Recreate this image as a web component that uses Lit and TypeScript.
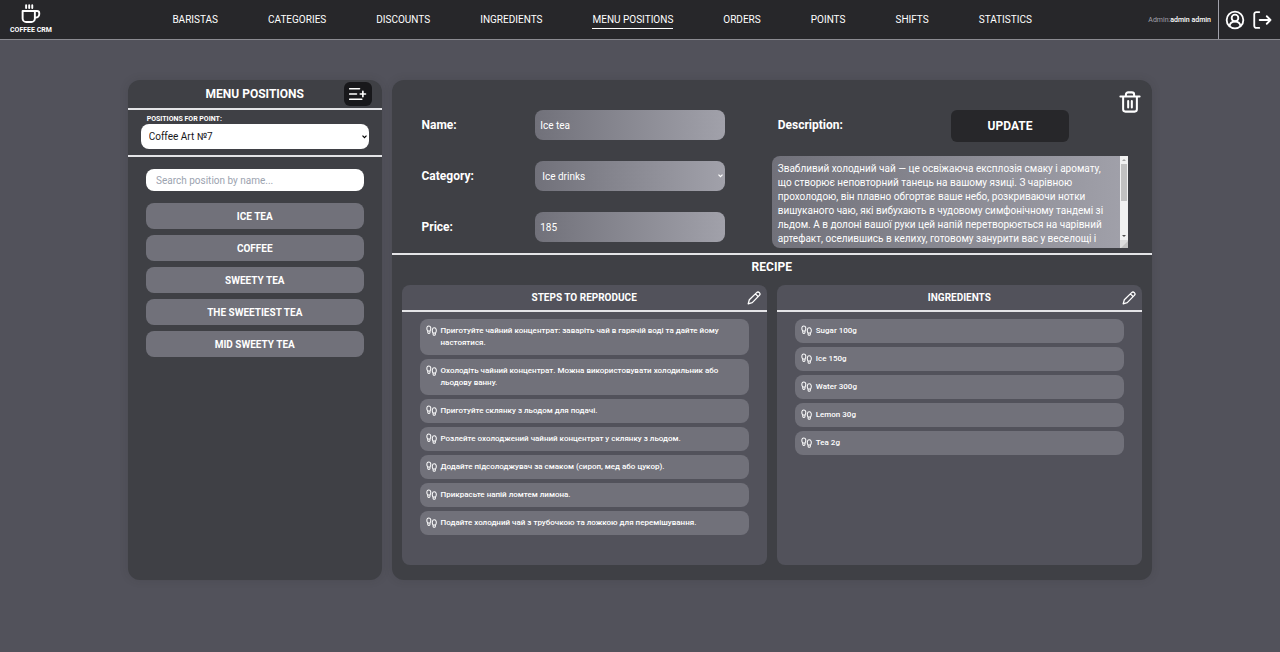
import { LitElement, html, css, svg } from "lit";
import { customElement, state } from "lit/decorators.js";
import { classMap } from "lit/directives/class-map.js";

const NAV = [
  "Baristas",
  "Categories",
  "Discounts",
  "Ingredients",
  "Menu positions",
  "Orders",
  "Points",
  "Shifts",
  "Statistics",
];

const POSITIONS = ["Ice tea", "Coffee", "Sweety tea", "The sweetiest tea", "Mid sweety tea"];

const STEPS = [
  "Приготуйте чайний концентрат: заваріть чай в гарячій воді та дайте йому настоятися.",
  "Охолодіть чайний концентрат. Можна використовувати холодильник або льодову ванну.",
  "Приготуйте склянку з льодом для подачі.",
  "Розлейте охолоджений чайний концентрат у склянку з льодом.",
  "Додайте підсолоджувач за смаком (сироп, мед або цукор).",
  "Прикрасьте напій ломтем лимона.",
  "Подайте холодний чай з трубочкою та ложкою для перемішування.",
];

const INGREDIENTS = ["Sugar 100g", "Ice 150g", "Water 300g", "Lemon 30g", "Tea 2g"];

const DESCRIPTION =
  "Звабливий холодний чай — це освіжаюча експлозія смаку і аромату, що створює неповторний танець на вашому язиці. З чарівною прохолодою, він плавно обгортає ваше небо, розкриваючи нотки вишуканого чаю, які вибухають в чудовому симфонічному тандемі зі льдом. А в долоні вашої руки цей напій перетворюється на чарівний артефакт, оселившись в келиху, готовому занурити вас у веселощі і";

const iconCup = svg`
  <path d="M7 1.500v3M10.500 1.500v3M14 1.500v3" />
  <path d="M3 8h14v8.500a4 4 0 0 1-4 4H7a4 4 0 0 1-4-4z" />
  <path d="M17 8h2.500A2.500 2.500 0 0 1 22 10.500v1a4 4 0 0 1-4 4h-1" />`;
const iconUser = svg`
  <circle cx="12" cy="12" r="10" />
  <circle cx="12" cy="9.500" r="4" />
  <path d="M5.500 19.500c.3-3.500 2.800-5.500 6.500-5.500s6.200 2 6.500 5.500" />`;
const iconExit = svg`
  <path d="M7.500 2.500H4A2.500 2.500 0 0 0 1.500 5v14A2.500 2.500 0 0 0 4 21.500h3.500" />
  <path d="M8 12h13M16.500 7.500L21 12l-4.500 4.500" />`;
const iconAdd = svg`
  <path d="M1 5h13M1 12h9M1 19h16M18.500 8.500v7M15 12h7" />`;
const iconTrash = svg`
  <path d="M1.500 6h21M4.500 6v14a2.500 2.500 0 0 0 2.500 2.500h10a2.500 2.500 0 0 0 2.500-2.500V6M7.500 5.500V4A2.500 2.500 0 0 1 10 1.500h4A2.500 2.500 0 0 1 16.500 4v1.500M10 11v7M14 11v7" />`;
const iconPencil = svg`
  <path d="M2 22l2-7L16.500 2.800a3.200 3.200 0 0 1 4.700 4.700L9 20zM14.500 5l4.500 4.500" />`;
const iconSteps = svg`
  <path d="M3.500 13C1 9 .8 2 6 2s5.500 6.500 3 11zM3.800 13v3a2.500 2.500 0 0 0 5 0v-3" />
  <path d="M15.200 17.500C12.800 13 13 6 18 6s5.500 7 2.800 11.500zM15.400 17.500v2.500a2.500 2.500 0 0 0 5 0v-2.500" />`;

const icon = (body: unknown, cls: string) =>
  html`<svg class="icon ${cls}" viewBox="0 0 24 24" aria-hidden="true">${body}</svg>`;

@customElement("app-root")
export class AppRoot extends LitElement {
  @state() private active = "Menu positions";

  static styles = css`
    :host {
      display: flex;
      flex-direction: column;
      min-height: 100vh;
      background: #52525b;
      color: #fff;
      font-family: Roboto, "Noto Sans", sans-serif;
      font-size: 10px;
    }
    *,
    *::before,
    *::after {
      box-sizing: border-box;
    }
    h1,
    h2,
    h3,
    ul {
      margin: 0;
      padding: 0;
      list-style: none;
    }
    button,
    input,
    select,
    textarea {
      font: inherit;
      color: inherit;
      border: 0;
      margin: 0;
    }
    button {
      cursor: pointer;
    }
    .icon {
      display: block;
      flex: none;
      fill: none;
      stroke: currentColor;
      stroke-width: 2.2;
      stroke-linecap: round;
      stroke-linejoin: round;
    }

    .topbar {
      display: flex;
      justify-content: space-between;
      align-items: stretch;
      height: 40px;
      background: #27272a;
      border-bottom: 1px solid #8b8b91;
    }
    .brand {
      display: flex;
      flex-direction: column;
      align-items: center;
      padding: 4px 4px 0 10px;
      color: #fff;
      text-decoration: none;
      font-size: 7px;
      line-height: 10px;
      font-weight: 700;
    }
    .cup {
      width: 21px;
      height: 21px;
    }
    .nav {
      display: flex;
      align-items: center;
      gap: 50px;
    }
    .nav-link {
      color: #fff;
      text-decoration: none;
      text-transform: uppercase;
      line-height: 16px;
      border-top: 1px solid transparent;
      border-bottom: 1px solid transparent;
    }
    .nav-link.current {
      border-bottom-color: #fff;
    }
    .session {
      display: flex;
      align-items: center;
      font-size: 7px;
    }
    .who {
      padding-right: 7px;
      color: #a1a1aa;
    }
    .who-name {
      color: #fff;
      font-weight: 500;
    }
    .actions {
      display: flex;
      align-items: center;
      gap: 8px;
      align-self: stretch;
      padding: 0 7px 0 6px;
      border-left: 1px solid #a1a1aa;
    }
    .bare {
      padding: 0;
      background: none;
    }
    .act {
      width: 20px;
      height: 20px;
    }

    .main {
      display: grid;
      grid-template-columns: minmax(0, 1fr) minmax(0, 3fr);
      gap: 10px;
      width: 80%;
      margin: 40px auto;
    }
    .panel {
      background: #3f4045;
      border-radius: 12px;
      box-shadow: 0 0 8px rgba(39, 39, 42, 0.15);
    }

    .side-head {
      display: grid;
      grid-template-columns: 28px 1fr 28px;
      align-items: center;
      padding: 2px 10px;
      height: 30px;
      border-bottom: 2px solid #e4e4e7;
      text-align: center;
    }
    .title {
      grid-column: 2;
      font-size: 12px;
      line-height: 16px;
      font-weight: 700;
      text-transform: uppercase;
    }
    .add {
      display: grid;
      place-items: center;
      height: 24px;
      padding: 0;
      background: #18181b;
      border-radius: 6px;
    }
    .add-icon {
      width: 18px;
      height: 18px;
    }
    .point {
      display: flex;
      flex-direction: column;
      padding: 4px 5% 6px;
      border-bottom: 2px solid #e4e4e7;
    }
    .point-label {
      padding-left: 6px;
      font-size: 7px;
      line-height: 10px;
      font-weight: 700;
      text-transform: uppercase;
    }
    .point-select {
      appearance: none;
      height: 25px;
      padding: 0 8px;
      border-radius: 8px;
      background: #fff
        url("data:image/svg+xml,%3Csvg xmlns='http://www.w3.org/2000/svg' width='5' height='4'%3E%3Cpath d='M.5 .7l2 2 2-2' fill='none' stroke='%23000' stroke-width='1.200'/%3E%3C/svg%3E")
        right 2px center no-repeat;
      color: #18181b;
    }
    .side-body {
      display: flex;
      flex-direction: column;
      gap: 12px;
      padding: 12px 18px;
    }
    .search {
      width: 100%;
      height: 22px;
      padding: 0 10px;
      border-radius: 8px;
      background: #fff;
      color: #18181b;
    }
    .search::placeholder {
      color: #9ca3af;
    }
    .positions {
      display: grid;
      gap: 6px;
    }
    .position {
      width: 100%;
      height: 26px;
      padding: 0;
      border-radius: 8px;
      background: #71717a;
      font-weight: 700;
      text-transform: uppercase;
    }

    .editor {
      display: grid;
      grid-template-columns: repeat(2, minmax(0, 1fr));
      border-bottom: 2px solid #e4e4e7;
    }
    .fields {
      display: grid;
      gap: 21px;
      align-content: start;
      padding: 30px 47px 11px 30px;
    }
    .field {
      display: grid;
      grid-template-columns: 3fr 5fr;
      align-items: center;
    }
    .label {
      font-size: 12px;
      font-weight: 700;
    }
    .control {
      width: 100%;
      min-width: 0;
      height: 30px;
      padding: 0 5px;
      border-radius: 8px;
      background: linear-gradient(90deg, #71717a, #a1a1aa);
    }
    .category {
      appearance: none;
      padding: 0 7px;
      background:
        url("data:image/svg+xml,%3Csvg xmlns='http://www.w3.org/2000/svg' width='5' height='4'%3E%3Cpath d='M.5 .7l2 2 2-2' fill='none' stroke='%23fff' stroke-width='1.200'/%3E%3C/svg%3E")
          right 2px center no-repeat,
        linear-gradient(90deg, #71717a, #a1a1aa);
    }
    .details {
      display: flex;
      flex-direction: column;
      gap: 14px;
      padding: 10px 11px 5px 0;
    }
    .details-head {
      display: flex;
      align-items: flex-start;
      justify-content: space-between;
      height: 52px;
      padding-left: 6px;
    }
    .details-head .label {
      line-height: 30px;
      margin-top: 20px;
    }
    .head-actions {
      display: flex;
      align-items: flex-start;
      gap: 50px;
    }
    .update {
      width: 118px;
      height: 32px;
      margin-top: 20px;
      padding: 0;
      border-radius: 6px;
      background: #27272a;
      font-size: 12px;
      font-weight: 700;
      text-transform: uppercase;
    }
    .trash {
      width: 22px;
      height: 24px;
    }
    .description-box {
      display: grid;
      grid-template-columns: minmax(0, 1fr) 8px;
      height: 92px;
      margin-right: 13px;
      border-radius: 8px 0 0 8px;
      background: linear-gradient(90deg, #71717a, #a1a1aa);
      overflow: hidden;
    }
    .description {
      height: 92px;
      padding: 6px;
      background: none;
      line-height: 14px;
      resize: none;
      outline: none;
      scrollbar-width: none;
    }
    .scrollbar {
      display: flex;
      flex-direction: column;
      align-items: center;
      background: #f1f1f1;
    }
    .scroll-arrow {
      display: block;
      width: 8px;
      height: 8px;
      fill: #505050;
    }
    .scroll-arrow.start {
      fill: #a3a3a3;
    }
    .scroll-track {
      flex: 1;
      width: 6px;
    }
    .scroll-thumb {
      width: 6px;
      height: 55%;
      background: #c1c1c1;
    }
    .grip {
      display: block;
      width: 8px;
      height: 8px;
      background: #dcdcdc;
      fill: #c1c1c1;
    }

    .recipe {
      padding: 4px 10px 15px;
    }
    .recipe-title {
      padding-bottom: 10px;
      text-align: center;
    }
    .cards {
      display: grid;
      grid-template-columns: repeat(2, minmax(0, 1fr));
      gap: 10px;
    }
    .card {
      min-height: 280px;
      border-radius: 8px;
      background: #52525b;
    }
    .card-head {
      display: grid;
      grid-template-columns: 14px 1fr 14px;
      align-items: center;
      height: 27px;
      padding: 0 6px;
      border-bottom: 2px solid #e4e4e7;
      text-align: center;
    }
    .card-title {
      grid-column: 2;
      font-size: 10px;
      font-weight: 700;
      text-transform: uppercase;
    }
    .pencil {
      width: 14px;
      height: 14px;
    }
    .items {
      display: grid;
      gap: 4px;
      padding: 7px 18px;
    }
    .item {
      display: flex;
      gap: 4px;
      padding: 6px;
      border-radius: 8px;
      background: #71717a;
      font-size: 8px;
      line-height: 12px;
      font-weight: 500;
    }
    .item-text {
      flex: 1;
      max-width: 292px;
    }
    .steps {
      width: 11px;
      height: 11px;
    }
  `;

  private renderCard(title: string, items: string[]) {
    return html`
      <section class="card">
        <header class="card-head">
          <h3 class="card-title">${title}</h3>
          <button class="bare" aria-label="Edit ${title.toLowerCase()}">${icon(iconPencil, "pencil")}</button>
        </header>
        <ul class="items">
          ${items.map(
            (text) => html`<li class="item">${icon(iconSteps, "steps")}<span class="item-text">${text}</span></li>`
          )}
        </ul>
      </section>
    `;
  }

  render() {
    return html`
      <header class="topbar">
        <a class="brand" href="#">${icon(iconCup, "cup")}COFFEE CRM</a>
        <nav class="nav">
          ${NAV.map(
            (name) => html`<a
              href="#"
              class=${classMap({ "nav-link": true, current: name === this.active })}
              @click=${(e: Event) => {
                e.preventDefault();
                this.active = name;
              }}
              >${name}</a
            >`
          )}
        </nav>
        <div class="session">
          <span class="who">Admin:<span class="who-name">admin admin</span></span>
          <div class="actions">
            <button class="bare" aria-label="Profile">${icon(iconUser, "act")}</button>
            <button class="bare" aria-label="Log out">${icon(iconExit, "act")}</button>
          </div>
        </div>
      </header>

      <main class="main">
        <aside class="panel">
          <header class="side-head">
            <h1 class="title">Menu positions</h1>
            <button class="add" aria-label="Add position">${icon(iconAdd, "add-icon")}</button>
          </header>
          <div class="point">
            <label class="point-label" for="point">Positions for point:</label>
            <select class="point-select" id="point">
              <option>Coffee Art №7</option>
            </select>
          </div>
          <div class="side-body">
            <input class="search" type="text" aria-label="Search position" placeholder="Search position by name..." />
            <ul class="positions">
              ${POSITIONS.map((name) => html`<li><button class="position">${name}</button></li>`)}
            </ul>
          </div>
        </aside>

        <section class="panel">
          <div class="editor">
            <div class="fields">
              <div class="field">
                <label class="label" for="name">Name:</label>
                <input class="control" id="name" type="text" .value=${"Ice tea"} />
              </div>
              <div class="field">
                <label class="label" for="category">Category:</label>
                <select class="control category" id="category">
                  <option>Ice drinks</option>
                </select>
              </div>
              <div class="field">
                <label class="label" for="price">Price:</label>
                <input class="control" id="price" type="text" .value=${"185"} />
              </div>
            </div>
            <div class="details">
              <div class="details-head">
                <label class="label" for="description">Description:</label>
                <div class="head-actions">
                  <button class="update">Update</button>
                  <button class="bare" aria-label="Delete position">${icon(iconTrash, "trash")}</button>
                </div>
              </div>
              <div class="description-box">
                <textarea class="description" id="description" .value=${DESCRIPTION}></textarea>
                <div class="scrollbar" aria-hidden="true">
                  <svg class="scroll-arrow start" viewBox="0 0 8 8"><path d="M2 5l2-2 2 2z" /></svg>
                  <div class="scroll-track"><div class="scroll-thumb"></div></div>
                  <svg class="scroll-arrow" viewBox="0 0 8 8"><path d="M2 3l2 2 2-2z" /></svg>
                  <svg class="grip" viewBox="0 0 8 8"><path d="M1 8l7-7v7z" /></svg>
                </div>
              </div>
            </div>
          </div>
          <div class="recipe">
            <h2 class="title recipe-title">Recipe</h2>
            <div class="cards">
              ${this.renderCard("Steps to reproduce", STEPS)} ${this.renderCard("Ingredients", INGREDIENTS)}
            </div>
          </div>
        </section>
      </main>
    `;
  }
}
